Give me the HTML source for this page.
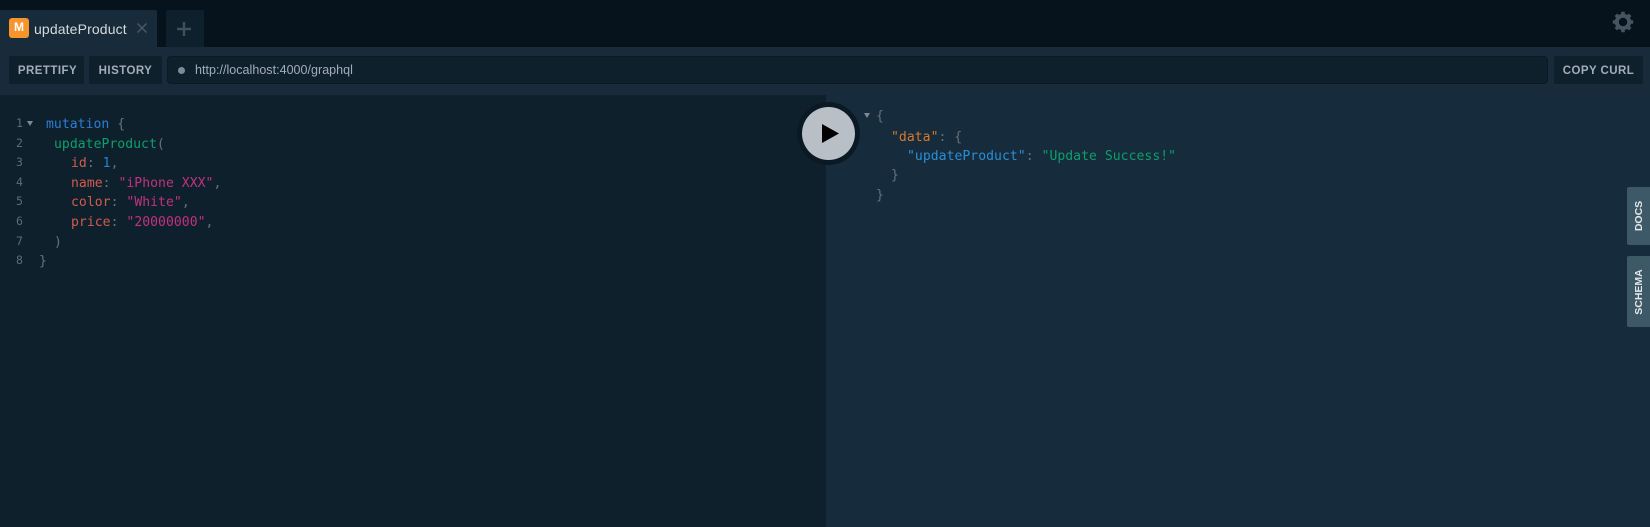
<!DOCTYPE html>
<html><head><meta charset="utf-8"><style>
*{box-sizing:border-box}
html,body{margin:0;padding:0;width:1650px;height:527px;overflow:hidden;background:#162b3b;font-family:"Liberation Sans",sans-serif}
.a{position:absolute}
.btn{position:absolute;top:57px;height:28px;color:#a3adb5;font-size:11.5px;font-weight:bold;letter-spacing:.45px;line-height:28px;text-align:center;white-space:nowrap}
.bg{position:absolute;top:56px;height:28px;background:#0f202d;border-radius:2px}
.l{position:absolute;font-family:"DejaVu Sans Mono","Liberation Mono",monospace;font-size:13.1px;letter-spacing:.03px;line-height:20px;white-space:pre;color:#66727b}
.n{position:absolute;left:16px;font-family:"DejaVu Sans Mono","Liberation Mono",monospace;font-size:11.5px;line-height:20px;color:#5d6b75}
.side{position:absolute;left:1627px;width:23px;background:#3d5866;border-radius:2px 0 0 2px}
.side span{position:absolute;left:50%;top:50%;transform:translate(-50%,-50%) rotate(-90deg);color:#e4e8ea;font-size:10.5px;font-weight:bold;white-space:nowrap}
.m{color:#2a7ed3}.f{color:#0c9f6c}.k{color:#d25b4e}.s{color:#c0327f}.o{color:#d67a2c}.b{color:#2a8ed6}
</style></head><body>
<div class="a" style="left:0;top:0;width:1650px;height:47px;background:#06131c"></div>
<div class="a" style="left:0;top:47px;width:1650px;height:48px;background:#172b3a"></div>
<div class="a" style="left:0;top:95px;width:826px;height:432px;background:#0f202d"></div>

<div class="a" style="left:0;top:10px;width:157px;height:37px;background:#172b3a;border-radius:0 2px 0 0"></div>
<div class="a" style="left:9px;top:18px;width:20px;height:20px;background:#f7952c;border-radius:3px;color:#fff;font-size:12px;font-weight:bold;text-align:center;line-height:19px">M</div>
<div class="a" style="left:34px;top:19px;color:#d5dadd;font-size:14px;line-height:20px;letter-spacing:.13px;white-space:nowrap">updateProduct</div>
<svg class="a" style="left:136px;top:22px" width="12" height="12" viewBox="0 0 12 12"><path d="M1.5 1.5L10.5 10.5M10.5 1.5L1.5 10.5" stroke="#4c5b66" stroke-width="1.3" fill="none"/></svg>
<div class="a" style="left:166px;top:10px;width:38px;height:37px;background:#0f202d;border-radius:2px 2px 0 0"></div>
<svg class="a" style="left:176px;top:21px" width="16" height="16" viewBox="0 0 16 16"><path d="M8 1V15M1 8H15" stroke="#3f4f5b" stroke-width="2.4" fill="none"/></svg>
<svg class="a" style="left:1612px;top:11px" width="22" height="22" viewBox="0 0 22 22"><circle cx="11" cy="11" r="6.2" fill="none" stroke="#46545f" stroke-width="4"/><g stroke="#46545f" stroke-width="3.6"><path d="M11 .8V4M11 18V21.2M.8 11H4M18 11H21.2M3.8 3.8L6 6M16 16L18.2 18.2M18.2 3.8L16 6M6 16L3.8 18.2"/></g></svg>

<div class="bg" style="left:9px;width:75px"></div>
<div class="bg" style="left:89px;width:73px"></div>
<div class="bg" style="left:1554px;width:89px"></div>
<div class="btn" style="left:10px;width:75px">PRETTIFY</div>
<div class="btn" style="left:89px;width:73px">HISTORY</div>
<div class="a" style="left:167px;top:56px;width:1381px;height:28px;background:#0f202d;border:1px solid #0b1924;border-radius:4px"></div>
<div class="a" style="left:178px;top:67px;width:7px;height:7px;border-radius:50%;background:#7f8a92"></div>
<div class="a" style="left:195px;top:60px;color:#a3adb5;font-size:12.5px;letter-spacing:.03px;line-height:20px;white-space:nowrap">http://localhost:4000/graphql</div>
<div class="btn" style="left:1554px;width:89px">COPY CURL</div>

<div class="n" style="top:113px">1</div><div class="n" style="top:133px">2</div><div class="n" style="top:152px">3</div><div class="n" style="top:172px">4</div><div class="n" style="top:191px">5</div><div class="n" style="top:211px">6</div><div class="n" style="top:231px">7</div><div class="n" style="top:250px">8</div>
<svg class="a" style="left:27px;top:121px" width="6" height="6"><path d="M0 0H6L3 5Z" fill="#7d8a93"/></svg>
<div class="l" style="left:46px;top:115px"><span class="m">mutation</span> {</div>
<div class="l" style="left:54px;top:135px"><span class="f">updateProduct</span>(</div>
<div class="l" style="left:71px;top:154px"><span class="k">id</span>: <span class="m">1</span>,</div>
<div class="l" style="left:71px;top:174px"><span class="k">name</span>: <span class="s">"iPhone XXX"</span>,</div>
<div class="l" style="left:71px;top:193px"><span class="k">color</span>: <span class="s">"White"</span>,</div>
<div class="l" style="left:71px;top:213px"><span class="k">price</span>: <span class="s">"20000000"</span>,</div>
<div class="l" style="left:54px;top:233px">)</div>
<div class="l" style="left:39px;top:252px">}</div>

<svg class="a" style="left:864px;top:113px" width="6" height="6"><path d="M0 0H6L3 5Z" fill="#7d8a93"/></svg>
<div class="l" style="left:876px;top:107px">{</div>
<div class="l" style="left:891px;top:128px"><span class="o">"data"</span>: {</div>
<div class="l" style="left:907px;top:147px"><span class="b">"updateProduct"</span>: <span class="f">"Update Success!"</span></div>
<div class="l" style="left:891px;top:166px">}</div>
<div class="l" style="left:876px;top:186px">}</div>

<div class="a" style="left:797px;top:102px;width:63px;height:63px;border-radius:50%;background:#0b1924"></div>
<div class="a" style="left:802px;top:107px;width:53px;height:53px;border-radius:50%;background:#b9bfc6"></div>
<svg class="a" style="left:822px;top:124px" width="17" height="19"><path d="M0 0L17 9.5L0 19Z" fill="#000"/></svg>

<div class="side" style="top:187px;height:58px"><span>DOCS</span></div>
<div class="side" style="top:256px;height:71px"><span>SCHEMA</span></div>
</body></html>
